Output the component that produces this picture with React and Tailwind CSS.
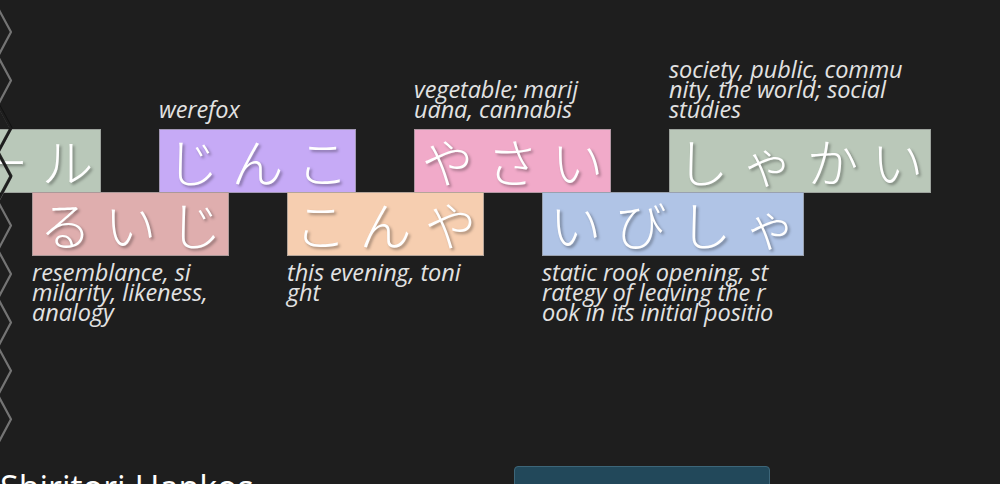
import React from 'react';

const topRow = [
  { kana: 'ルール', color: 'bg-[#b9c8b9]', gloss: [] },
  { kana: 'じんこ', color: 'bg-[#c6aaf6]', gloss: ['werefox'] },
  { kana: 'やさい', color: 'bg-[#f1aac9]', gloss: ['vegetable; marij', 'uana, cannabis'] },
  { kana: 'しゃかい', color: 'bg-[#bac8b9]', gloss: ['society, public, commu', 'nity, the world; social', 'studies'] },
];

const bottomRow = [
  { kana: 'るいじ', color: 'bg-[#dfaeae]', gloss: ['resemblance, si', 'milarity, likeness,', 'analogy'] },
  { kana: 'こんや', color: 'bg-[#f6ceb0]', gloss: ['this evening, toni', 'ght'] },
  { kana: 'いびしゃ', color: 'bg-[#b0c4e6]', gloss: ['static rook opening, st', 'rategy of leaving the r', 'ook in its initial positio'] },
];

const kanaFont = { fontFamily: '"Noto Sans CJK JP", sans-serif' };
const latinFont = { fontFamily: '"Open Sans", "Noto Sans", sans-serif' };

function Tile({ kana, color }) {
  return (
    <div className={`flex h-[64px] border border-[#8a8a8a]/60 ${color}`}>
      {[...kana].map((ch, i) => (
        <span
          key={i}
          className="w-[65px] flex items-center justify-center text-[52px] font-light leading-none text-white [text-shadow:2px_2px_3px_rgba(0,0,0,0.35)]"
          style={kanaFont}
        >
          {ch}
        </span>
      ))}
    </div>
  );
}

function Gloss({ lines }) {
  return (
    <div className="italic text-[23.5px] leading-[20px] text-[#e2e2e2] tracking-[-0.1px]" style={latinFont}>
      {lines.map((l, i) => (
        <div key={i} className="whitespace-nowrap">{l}</div>
      ))}
    </div>
  );
}

function Zigzag() {
  const pts = [];
  for (let i = 0; i < 9; i++) {
    const apex = 32 + i * 48.4;
    pts.push(`-2,${apex - 24}`, `11,${apex}`);
  }
  pts.push(`-2,${32 + 9 * 48.4 - 24}`);
  return (
    <svg className="absolute left-0 top-0 pointer-events-none" width="16" height="450" viewBox="0 0 16 450">
      <polyline points={pts.join(' ')} fill="none" stroke="#747474" strokeWidth="2.2" strokeLinejoin="round" />
      <polyline
        points="-2,104 11,128 -2,152 11,176 -2,200"
        fill="none"
        stroke="#0e0e0e"
        strokeWidth="3"
        strokeLinejoin="round"
        opacity="0.85"
      />
    </svg>
  );
}

export default function App() {
  return (
    <div className="relative h-[484px] w-[1000px] overflow-hidden bg-[#1e1e1e]" style={latinFont}>
      <div className="pt-[59px] h-[467px]">
        <div className="grid grid-cols-[repeat(4,255px)] items-end -ml-[96px]">
          {topRow.map((t, i) => (
            <div key={i} className="flex flex-col gap-[10px]">
              {t.gloss.length > 0 && <Gloss lines={t.gloss} />}
              <div className="w-max">
                <Tile kana={t.kana} color={t.color} />
              </div>
            </div>
          ))}
        </div>
        <div className="grid grid-cols-[repeat(3,255px)] items-start ml-[32px] -mt-px">
          {bottomRow.map((t, i) => (
            <div key={i} className="flex flex-col gap-[6px]">
              <div className="w-max">
                <Tile kana={t.kana} color={t.color} />
              </div>
              <Gloss lines={t.gloss} />
            </div>
          ))}
        </div>
      </div>

      <div className="flex items-start">
        <h1 className="w-[514px] text-[34px] leading-[40px] text-white" style={latinFont}>
          Shiritori Hankos
        </h1>
        <button className="-mt-px w-[256px] h-[60px] rounded border border-[#3d6679] bg-[#22485a] pt-[12px] text-[18px] text-white">
          Add this chain to my collection
        </button>
      </div>

      <Zigzag />
    </div>
  );
}
